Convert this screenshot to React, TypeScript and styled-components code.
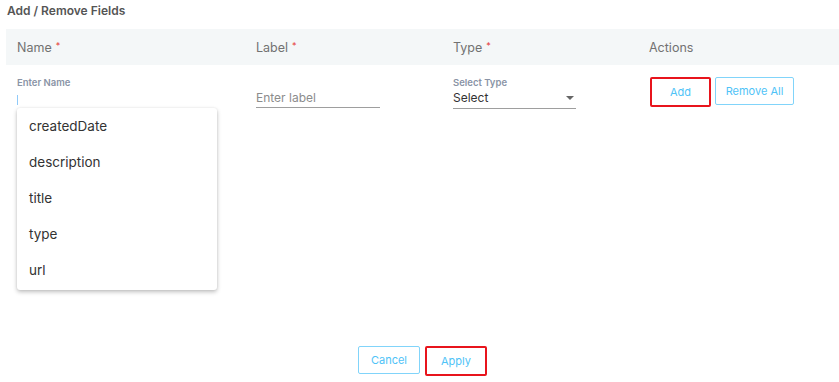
import React from 'react';
import styled, { createGlobalStyle } from 'styled-components';

const GlobalStyle = createGlobalStyle`
  html, body {
    margin: 0;
    padding: 0;
    background: #fff;
    font-family: Inter, 'Open Sans', 'Liberation Sans', sans-serif;
  }
`;

const Page = styled.div`
  min-height: 382px;
  box-sizing: border-box;
  padding: 0 0 6px 6px;
  display: flex;
  flex-direction: column;
`;

const Title = styled.div`
  height: 29px;
  line-height: 22px;
  padding-left: 1px;
  font-size: 12px;
  font-weight: 600;
  color: #555;
`;

const Grid = styled.div`
  display: grid;
  grid-template-columns: 239px 197px 196px 1fr;
`;

const HeaderRow = styled(Grid)`
  height: 36px;
  background: #f4f7f8;
  align-items: center;
`;

const HeadCell = styled.div`
  padding-left: 11px;
  font-size: 12.5px;
  color: #727272;
`;

const Req = styled.span`
  color: #e53935;
  font-size: 9px;
  margin-left: 4px;
  vertical-align: 3px;
`;

const BodyRow = styled(Grid)`
  align-items: start;
`;

const Cell = styled.div`
  position: relative;
  padding-left: 11px;
  padding-top: 12px;
`;

const SmallLabel = styled.div`
  font-size: 9.5px;
  line-height: 12px;
  font-weight: 600;
  color: #8a94a6;
`;

const NameInput = styled.div`
  height: 18px;
  margin-top: 2px;
  display: flex;
  align-items: center;
`;

const Caret = styled.span`
  width: 1px;
  height: 10px;
  background: #90caf9;
`;

const TextInput = styled.input`
  display: block;
  box-sizing: border-box;
  width: 124px;
  margin-top: 11px;
  height: 20px;
  padding: 0;
  border: none;
  border-bottom: 1px solid #9e9e9e;
  outline: none;
  font-family: inherit;
  font-size: 12px;
  color: #333;
  background: transparent;
  &::placeholder {
    color: #8c8c8c;
  }
`;

const SelectBox = styled.div`
  box-sizing: border-box;
  width: 123px;
  height: 19px;
  margin-top: 1px;
  border-bottom: 1px solid #9e9e9e;
  display: flex;
  align-items: center;
  justify-content: space-between;
  font-size: 12px;
  line-height: 14px;
  color: #333;
  padding-bottom: 3px;
`;

const Arrow = styled.span`
  width: 0;
  height: 0;
  margin-right: 2px;
  border-left: 4px solid transparent;
  border-right: 4px solid transparent;
  border-top: 4px solid #666;
`;

const Actions = styled.div`
  display: flex;
  align-items: flex-start;
  gap: 4px;
  padding-top: 12px;
  padding-left: 12px;
`;

const Button = styled.button<{ $highlight?: boolean; $w: number }>`
  box-sizing: border-box;
  width: ${p => p.$w}px;
  height: ${p => (p.$highlight ? 30 : 28)}px;
  background: #fff;
  border: ${p => (p.$highlight ? '2px solid #e8141c' : '1px solid #81d4fa')};
  border-radius: 2px;
  color: #4fc3f7;
  font-family: inherit;
  font-size: 11px;
  cursor: pointer;
  padding: 0;
`;

const Menu = styled.ul`
  position: absolute;
  left: 11px;
  top: 43px;
  width: 200px;
  margin: 0;
  padding: 0 0 2px;
  list-style: none;
  background: #fff;
  border-radius: 3px;
  box-shadow: 0 2px 4px rgba(0, 0, 0, 0.25), 0 0 2px rgba(0, 0, 0, 0.08);
  z-index: 2;
`;

const MenuItem = styled.li`
  height: 36px;
  line-height: 36px;
  padding-left: 12px;
  font-size: 13.5px;
  color: #333;
`;

const Spacer = styled.div`
  flex: 1;
`;

const Footer = styled.div`
  display: flex;
  justify-content: center;
  align-items: flex-start;
  gap: 5px;
`;

const fields = ['createdDate', 'description', 'title', 'type', 'url'];

export default function App() {
  return (
    <Page>
      <GlobalStyle />
      <Title>Add / Remove Fields</Title>
      <HeaderRow>
        <HeadCell>
          Name<Req>*</Req>
        </HeadCell>
        <HeadCell>
          Label<Req>*</Req>
        </HeadCell>
        <HeadCell>
          Type<Req>*</Req>
        </HeadCell>
        <HeadCell>Actions</HeadCell>
      </HeaderRow>
      <BodyRow>
        <Cell>
          <SmallLabel>Enter Name</SmallLabel>
          <NameInput>
            <Caret />
          </NameInput>
          <Menu>
            {fields.map(f => (
              <MenuItem key={f}>{f}</MenuItem>
            ))}
          </Menu>
        </Cell>
        <Cell>
          <TextInput placeholder="Enter label" />
        </Cell>
        <Cell>
          <SmallLabel>Select Type</SmallLabel>
          <SelectBox>
            Select
            <Arrow />
          </SelectBox>
        </Cell>
        <Actions>
          <Button $w={61} $highlight>
            Add
          </Button>
          <Button $w={79}>Remove All</Button>
        </Actions>
      </BodyRow>
      <Spacer />
      <Footer>
        <Button $w={62}>Cancel</Button>
        <Button $w={62} $highlight>
          Apply
        </Button>
      </Footer>
    </Page>
  );
}
